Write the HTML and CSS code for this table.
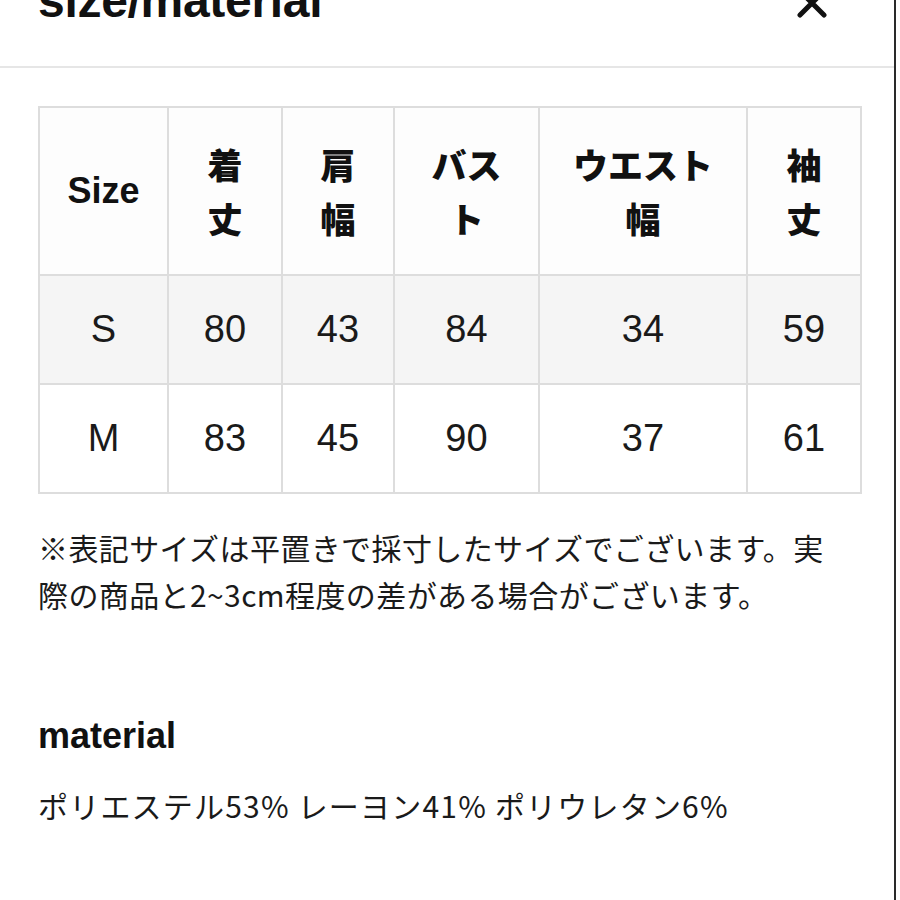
FILE: index.html
```html
<!DOCTYPE html>
<html lang="ja">
<head>
<meta charset="utf-8">
<title>size/material</title>
<link rel="stylesheet" href="styles.css">
</head>
<body>
<div class="page">
  <header class="header">
    <h1 class="title">size/material</h1>
    <button class="close" aria-label="閉じる">
      <svg width="32" height="32" viewBox="0 0 32 32"><path d="M4 4 L28 28 M28 4 L4 28" stroke="#111" stroke-width="5" stroke-linecap="round" fill="none"/></svg>
    </button>
  </header>
  <main class="content">
    <table class="size-table">
      <colgroup>
        <col class="c1"><col class="c2"><col class="c3"><col class="c4"><col class="c5"><col class="c6">
      </colgroup>
      <thead>
        <tr>
          <th class="latin">Size</th>
          <th>着<br>丈</th>
          <th>肩<br>幅</th>
          <th>バス<br>ト</th>
          <th>ウエスト<br>幅</th>
          <th>袖<br>丈</th>
        </tr>
      </thead>
      <tbody>
        <tr class="alt">
          <td>S</td><td>80</td><td>43</td><td>84</td><td>34</td><td>59</td>
        </tr>
        <tr>
          <td>M</td><td>83</td><td>45</td><td>90</td><td>37</td><td>61</td>
        </tr>
      </tbody>
    </table>
    <p class="note">※表記サイズは平置きで採寸したサイズでございます。実際の商品と2~3cm程度の差がある場合がございます。</p>
    <h2 class="section-title">material</h2>
    <p class="material">ポリエステル53% レーヨン41% ポリウレタン6%</p>
  </main>
</div>
</body>
</html>
```

FILE: styles.css
```css
html, body {
  margin: 0;
  padding: 0;
  background: #ffffff;
}

body {
  font-family: "Liberation Sans", "Noto Sans CJK JP", sans-serif;
  color: #1a1a1a;
  height: 900px;
  overflow: hidden;
}

.page {
  width: 896px;
  height: 940px;
  box-sizing: border-box;
  border-right: 2px solid #2a2a2a;
  margin-top: -40px;
}

.header {
  display: flex;
  justify-content: space-between;
  align-items: flex-start;
  height: 108px;
  padding: 16px 66px 0 38px;
  box-sizing: border-box;
  border-bottom: 2px solid #e6e6e6;
}

.title {
  margin: 0;
  font-family: "Liberation Sans", sans-serif;
  font-weight: 700;
  font-size: 48px;
  line-height: 50px;
  color: #111;
  letter-spacing: -0.3px;
}

.close {
  margin-top: 11px;
  padding: 0;
  border: 0;
  background: none;
  width: 32px;
  height: 32px;
  display: block;
}

.close svg {
  display: block;
}

.content {
  padding: 38px 0 0 38px;
}

.size-table {
  width: 822px;
  table-layout: fixed;
  border-collapse: collapse;
  border: 2px solid #dddddd;
}

.c1 { width: 129px; }
.c2 { width: 114px; }
.c3 { width: 112px; }
.c4 { width: 145px; }
.c5 { width: 208px; }
.c6 { width: 114px; }

.size-table th,
.size-table td {
  border: 2px solid #dddddd;
  text-align: center;
  vertical-align: middle;
  padding: 0;
}

.size-table th {
  height: 166px;
  font-family: "Noto Sans CJK JP", sans-serif;
  font-weight: 900;
  font-size: 35px;
  line-height: 54px;
  color: #111;
  background: #fdfdfd;
}

.size-table th.latin {
  font-family: "Liberation Sans", sans-serif;
  font-weight: 700;
  font-size: 36px;
}

.size-table td {
  height: 107px;
  font-family: "Liberation Sans", sans-serif;
  font-size: 38px;
  color: #1a1a1a;
}

.size-table tr.alt td {
  background: #f5f5f5;
}

.note {
  margin: 30px 0 0 0;
  width: 800px;
  font-family: "Noto Sans CJK JP", sans-serif;
  font-size: 30px;
  line-height: 47px;
  letter-spacing: 0.4px;
  color: #1a1a1a;
}

.section-title {
  margin: 98px 0 0 0;
  font-family: "Liberation Sans", sans-serif;
  font-weight: 700;
  font-size: 36px;
  line-height: 40px;
  color: #111;
}

.material {
  margin: 25px 0 0 0;
  font-family: "Noto Sans CJK JP", sans-serif;
  font-size: 30px;
  line-height: 48px;
  letter-spacing: 1.2px;
  color: #1a1a1a;
}
```
